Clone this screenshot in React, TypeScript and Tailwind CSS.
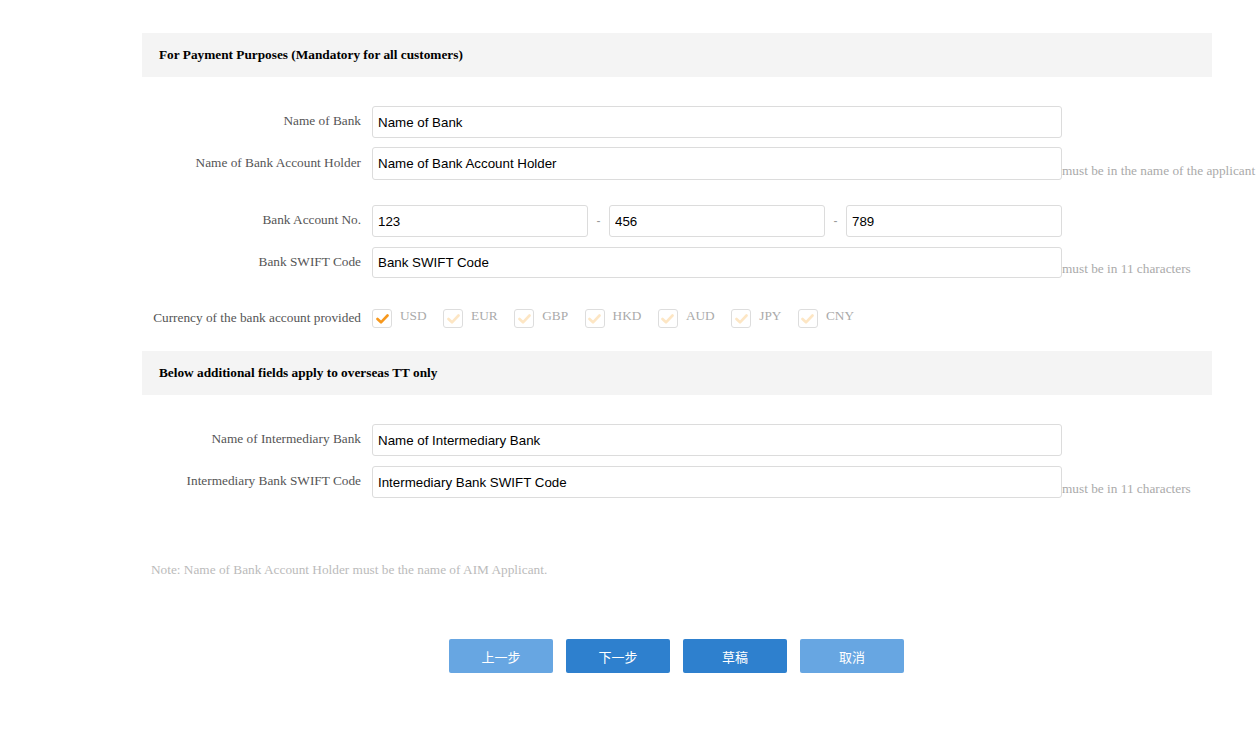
import { useState } from "react";

const serif = "font-['Liberation_Serif','Times_New_Roman',serif]";
const sans = "font-['Liberation_Sans',Arial,sans-serif]";

const currencies = ["USD", "EUR", "GBP", "HKD", "AUD", "JPY", "CNY"];

function SectionHeader({ title }: { title: string }) {
  return (
    <div className={`h-[44px] bg-[#f4f4f4] pl-[17px] flex items-center ${serif} text-[13.3px] font-bold text-black`}>
      {title}
    </div>
  );
}

function Label({ text }: { text: string }) {
  return (
    <div className={`w-[230px] shrink-0 pr-[11px] text-right ${serif} text-[13.3px] text-[#555] leading-none pb-[2px] whitespace-nowrap`}>
      {text}
    </div>
  );
}

function TextInput({ value, className = "w-[690px]" }: { value: string; className?: string }) {
  return (
    <input
      defaultValue={value}
      className={`${className} h-full shrink-0 rounded-[3px] border border-[#dcdcdc] bg-white pl-[5px] ${sans} text-[13.33px] text-black outline-none`}
    />
  );
}

function Hint({ text }: { text: string }) {
  return (
    <span className={`self-end whitespace-nowrap ${serif} text-[13.3px] text-[#aaa] leading-none pb-[3px]`}>
      {text}
    </span>
  );
}

function Row({ label, value, hint, h, mt }: { label: string; value: string; hint?: string; h: string; mt: string }) {
  return (
    <div className={`flex items-center ${h} ${mt}`}>
      <Label text={label} />
      <TextInput value={value} />
      {hint && <Hint text={hint} />}
    </div>
  );
}

function Check({ checked, label, onClick }: { checked: boolean; label: string; onClick: () => void }) {
  return (
    <div className="flex items-center mr-[16.5px] cursor-pointer" onClick={onClick}>
      <div className="w-[20px] h-[19px] rounded-[3px] border border-[#ddd] bg-white flex items-center justify-center">
        <svg width="13" height="10" viewBox="0 0 13 10">
          <polyline
            points="1.5,5 5,8.3 11.5,1.5"
            fill="none"
            stroke={checked ? "#f7981c" : "#fde6c4"}
            strokeWidth="2.6"
            strokeLinecap="round"
            strokeLinejoin="round"
          />
        </svg>
      </div>
      <span className={`ml-[8px] ${serif} text-[13.3px] text-[#aaa] leading-none pb-[6px]`}>{label}</span>
    </div>
  );
}

function Btn({ text, dark }: { text: string; dark?: boolean }) {
  return (
    <button
      className={`w-[104px] h-[34px] rounded-[2px] text-white text-[13px] font-['Noto_Sans_CJK_SC',sans-serif] ${dark ? "bg-[#2e80ce]" : "bg-[#67a6e2]"}`}
    >
      {text}
    </button>
  );
}

export default function App() {
  const [selected, setSelected] = useState<string[]>(["USD"]);

  const toggle = (c: string) =>
    setSelected((s) => (s.includes(c) ? s.filter((x) => x !== c) : [...s, c]));

  return (
    <div className="w-[1259px] h-[743px] bg-white overflow-hidden">
      <div className="ml-[142px] w-[1070px] pt-[33px]">
        <SectionHeader title="For Payment Purposes (Mandatory for all customers)" />

        <Row label="Name of Bank" value="Name of Bank" h="h-[32px]" mt="mt-[29px]" />
        <Row
          label="Name of Bank Account Holder"
          value="Name of Bank Account Holder"
          hint="must be in the name of the applicant"
          h="h-[33px]"
          mt="mt-[9px]"
        />

        {/* Account number split in three */}
        <div className="flex items-center h-[32px] mt-[25px]">
          <Label text="Bank Account No." />
          <TextInput value="123" className="w-[216px]" />
          <span className={`w-[21px] text-center ${sans} text-[12px] text-[#999]`}>-</span>
          <TextInput value="456" className="w-[216px]" />
          <span className={`w-[21px] text-center ${sans} text-[12px] text-[#999]`}>-</span>
          <TextInput value="789" className="w-[216px]" />
        </div>

        <Row
          label="Bank SWIFT Code"
          value="Bank SWIFT Code"
          hint="must be in 11 characters"
          h="h-[31px]"
          mt="mt-[10px]"
        />

        {/* Currency */}
        <div className="flex items-center h-[20px] mt-[31px]">
          <Label text="Currency of the bank account provided" />
          {currencies.map((c) => (
            <Check key={c} label={c} checked={selected.includes(c)} onClick={() => toggle(c)} />
          ))}
        </div>

        <div className="mt-[22px]">
          <SectionHeader title="Below additional fields apply to overseas TT only" />
        </div>

        <Row label="Name of Intermediary Bank" value="Name of Intermediary Bank" h="h-[32px]" mt="mt-[29px]" />
        <Row
          label="Intermediary Bank SWIFT Code"
          value="Intermediary Bank SWIFT Code"
          hint="must be in 11 characters"
          h="h-[32px]"
          mt="mt-[10px]"
        />

        <div className={`mt-[65px] pl-[9px] ${serif} text-[13.3px] text-[#bbb] leading-none`}>
          Note: Name of Bank Account Holder must be the name of AIM Applicant.
        </div>

        {/* Actions */}
        <div className="flex gap-[13px] ml-[307px] mt-[63px]">
          <Btn text="上一步" />
          <Btn text="下一步" dark />
          <Btn text="草稿" dark />
          <Btn text="取消" />
        </div>
      </div>
    </div>
  );
}
